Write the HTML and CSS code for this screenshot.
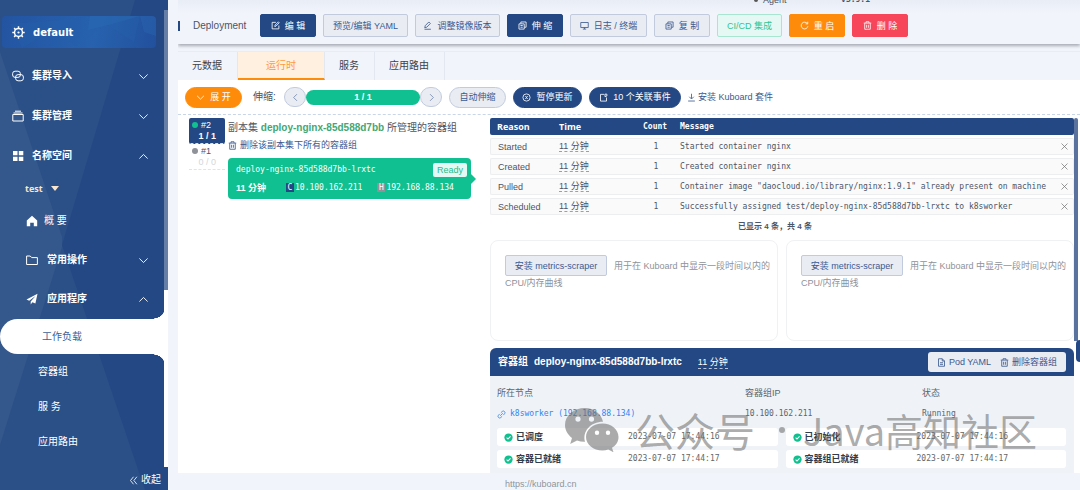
FILE: index.html
```html
<!DOCTYPE html>
<html lang="zh-CN">
<head>
<meta charset="utf-8">
<title>Kuboard - Deployment</title>
<link rel="stylesheet" href="styles.css">
</head>
<body>
<svg class="sprite" aria-hidden="true">
  <symbol id="down" viewBox="0 0 12 12"><path d="M1.5 3.8 6 8.2l4.500-4.400"/></symbol>
  <symbol id="up" viewBox="0 0 12 12"><path d="M1.500 8.200 6 3.800l4.500 4.400"/></symbol>
  <symbol id="left" viewBox="0 0 12 12"><path d="M8 1.500 3.500 6 8 10.500"/></symbol>
  <symbol id="right" viewBox="0 0 12 12"><path d="M4 1.500 8.500 6 4 10.500"/></symbol>
  <symbol id="edit" viewBox="0 0 12 12"><path d="M6.500 1.800H1.500v8.700h9V6M5 7.300l.3-1.700L9.800 1.200l1.200 1.200-4.400 4.500z"/></symbol>
  <symbol id="pen" viewBox="0 0 12 12"><path d="M2.300 9 3 6.200 7.800 1.300l2 2L5 8.300zM2 11h8.500"/></symbol>
  <symbol id="copy" viewBox="0 0 12 12"><path d="M1.300 3.800h7v7h-7zM3.800 3.500V1.300h7v7H8.500M3.300 6h3M3.300 8.300h3"/></symbol>
  <symbol id="monitor" viewBox="0 0 12 12"><path d="M1 2h10v6.700H1zM3.800 10.800h4.400M6 8.700v2"/></symbol>
  <symbol id="refresh" viewBox="0 0 12 12"><path d="M9.800 3.500A4.500 4.500 0 1 0 10.500 7M10.300 1v2.800H7.500"/></symbol>
  <symbol id="trash" viewBox="0 0 12 12"><path d="M1 2.800h10M4 2.800V1h4v1.800M2.300 3v8h7.400V3M4.800 5v4M7.200 5v4"/></symbol>
  <symbol id="pause" viewBox="0 0 12 12"><circle cx="6" cy="6" r="4.800"/><path d="M4.500 4 6 6 4.500 8M7.500 4 6 6l1.500 2"/></symbol>
  <symbol id="note" viewBox="0 0 12 12"><path d="M7 1.800H2v9h8V6M8 1.500h2.500V4L8 5z"/></symbol>
  <symbol id="download" viewBox="0 0 12 12"><path d="M6 1v6.500M3 5l3 3 3-3M1.500 10.700h9"/></symbol>
  <symbol id="doc" viewBox="0 0 12 12"><path d="M2 1h5l3 3v7H2zM7 1v3h3M4 6.300h4M4 8.500h4"/></symbol>
  <symbol id="link" viewBox="0 0 12 12"><path d="M5.200 3.600 7 1.900a2.200 2.200 0 0 1 3.100 3.100L8.400 6.800M6.800 8.400 5 10.100A2.200 2.200 0 0 1 1.900 7l1.700-1.800M4.300 7.700l3.400-3.400"/></symbol>
  <symbol id="close" viewBox="0 0 12 12"><path d="m2 2 8 8M10 2l-8 8"/></symbol>
  <symbol id="check" viewBox="0 0 12 12"><circle cx="6" cy="6" r="5.500" fill="#10c08f" stroke="none"/><path d="m3.500 6.200 1.800 1.800 3.400-3.600" stroke="#fff" stroke-width="1.400"/></symbol>
</svg>
<div class="app">
  <aside class="sidebar">
    <svg class="facets" viewBox="0 0 168 490" preserveAspectRatio="none" aria-hidden="true">
      <path fill="#2b5087" d="M0 0h135L62 245l83 245H0z"/>
      <path fill="#35588c" d="M0 52 62 237v10L0 445z"/>
    </svg>
    <a class="cluster" href="#">
      <svg class="facets" viewBox="0 0 154 32" preserveAspectRatio="none" aria-hidden="true">
        <path fill="#2560ad" d="m20 32 32-19 22 17 30-22 28 18 6-26H88L60 4 8 8z" opacity=".35"/>
        <path fill="#2f72bd" d="m88 0 50 0-28 8-24 6zM138 0l4 16 12 4V0z" opacity=".25"/>
      </svg>
      <svg class="wheel" viewBox="0 0 14 14" aria-hidden="true"><circle cx="7" cy="7" r="4.300"/><circle class="hub" cx="7" cy="7" r="1.200"/><path d="M7 .3v2.400M7 11.300v2.400M.3 7h2.400M11.300 7h2.400M2.300 2.300l1.600 1.600M10.100 10.100l1.600 1.600M11.700 2.300l-1.600 1.600M3.900 10.100l-1.600 1.600"/></svg>
      <span>default</span>
    </a>
    <nav>
      <button class="item"><svg class="ico lg" viewBox="0 0 12 12"><rect x=".6" y="1.200" width="7.800" height="6.200" rx="2.500"/><rect x="3.600" y="4.600" width="7.800" height="6.200" rx="2.500"/></svg><span>集群导入</span><svg class="ico chev"><use href="#down"/></svg></button>
      <button class="item"><svg class="ico lg" viewBox="0 0 12 12"><path d="M.8 4.500h10.400v6.500H.8zM1.500 3h9M3 1.200h6"/></svg><span>集群管理</span><svg class="ico chev"><use href="#down"/></svg></button>
      <button class="item"><svg class="ico lg" viewBox="0 0 12 12"><path fill="currentColor" stroke="none" d="M1 1h4.500v4.200H1zM6.800 1h4.500v4.200H6.800zM1 6.700h4.500V11H1zM6.800 6.700h4.500V11H6.800z"/></svg><span>名称空间</span><svg class="ico chev"><use href="#up"/></svg></button>
      <button class="namespace">test<i class="caret"></i></button>
      <a class="item sub plain" href="#"><svg class="ico lg" viewBox="0 0 12 12"><path fill="currentColor" stroke="none" d="M6 .8.800 5.500V11.200h3.400V7.800h3.600v3.400h3.400V5.500z"/></svg><span>概 要</span></a>
      <button class="item sub tight"><svg class="ico lg" viewBox="0 0 12 12"><path d="M.6 2h3.600l1.500 1.600h5.700v6.900H.6z"/></svg><span>常用操作</span><svg class="ico chev"><use href="#down"/></svg></button>
      <button class="item sub"><svg class="ico lg" viewBox="0 0 12 12"><path fill="currentColor" stroke="none" d="M11.500.8.500 6.500l2.700 1.200L9.500 3 4.700 8.400v3l1.700-2.200 3 1.300z"/></svg><span>应用程序</span><svg class="ico chev"><use href="#up"/></svg></button>
      <a class="leaf active" href="#">工作负载</a>
      <a class="leaf" href="#">容器组</a>
      <a class="leaf" href="#">服 务</a>
      <a class="leaf" href="#">应用路由</a>
    </nav>
    <button class="collapse"><svg class="ico" viewBox="0 0 12 12"><path d="M6 1 2 6l4 5M10.500 1l-4 5 4 5"/></svg>收起</button>
    <div class="side-scroll"></div>
  </aside>

  <main class="main">
    <header class="topbar">
      <div class="agent"><i></i><span>Agent</span><b>v3.9.1</b></div>
      <h1>Deployment</h1>
      <button class="btn primary w-s"><svg class="ico"><use href="#edit"/></svg>编 辑</button>
      <button class="btn w-l">预览/编辑 YAML</button>
      <button class="btn w-l"><svg class="ico"><use href="#pen"/></svg>调整镜像版本</button>
      <button class="btn primary w-s"><svg class="ico"><use href="#copy"/></svg>伸 缩</button>
      <button class="btn w-m"><svg class="ico"><use href="#monitor"/></svg>日志 / 终端</button>
      <button class="btn w-s"><svg class="ico"><use href="#copy"/></svg>复 制</button>
      <button class="btn success">CI/CD 集成</button>
      <button class="btn warning w-s"><svg class="ico"><use href="#refresh"/></svg>重 启</button>
      <button class="btn danger w-s"><svg class="ico"><use href="#trash"/></svg>删 除</button>
    </header>

    <div class="tabs" role="tablist">
      <button role="tab">元数据</button><button role="tab" class="on" aria-selected="true">运行时</button><button role="tab">服务</button><button role="tab">应用路由</button>
    </div>

    <section class="content">
      <div class="toolbar">
        <button class="pill warning"><svg class="ico"><use href="#down"/></svg>展 开</button>
        <span class="scale-label">伸缩:</span>
        <div class="scaler">
          <button class="round" aria-label="减少"><svg class="ico"><use href="#left"/></svg></button>
          <b>1 / 1</b>
          <button class="round" aria-label="增加"><svg class="ico"><use href="#right"/></svg></button>
        </div>
        <button class="pill">自动伸缩</button>
        <button class="pill primary p-m"><svg class="ico"><use href="#pause"/></svg>暂停更新</button>
        <button class="pill primary p-l"><svg class="ico"><use href="#note"/></svg>10 个关联事件</button>
        <a class="suite" href="#"><svg class="ico"><use href="#download"/></svg>安装 Kuboard 套件</a>
      </div>

      <div class="split">
        <div class="revisions">
          <div class="revs">
            <button class="rev current"><span><i></i>#2</span><b>1 / 1</b></button>
            <button class="rev"><span><i></i>#1</span><em>0 / 0</em></button>
          </div>
          <div class="replica">
            <h2>副本集 <strong>deploy-nginx-85d588d7bb</strong> 所管理的容器组</h2>
            <a class="remove" href="#"><svg class="ico"><use href="#trash"/></svg>删除该副本集下所有的容器组</a>
            <article class="pod">
              <div class="pod-line"><code>deploy-nginx-85d588d7bb-lrxtc</code><span class="ready">Ready</span></div>
              <div class="pod-line meta"><b class="age">11 分钟</b><code><i class="tag">C</i>10.100.162.211</code><code><i class="tag gray">H</i>192.168.88.134</code></div>
            </article>
          </div>
        </div>

        <div class="detail">
          <table class="events">
            <thead><tr><th class="c-reason">Reason</th><th class="c-time">Time</th><th class="c-count">Count</th><th>Message</th><th class="c-x"></th></tr></thead>
            <tbody>
              <tr><td>Started</td><td><span class="ago">11 分钟</span></td><td>1</td><td>Started container nginx</td><td><button class="x" aria-label="关闭"><svg class="ico"><use href="#close"/></svg></button></td></tr>
              <tr><td>Created</td><td><span class="ago">11 分钟</span></td><td>1</td><td>Created container nginx</td><td><button class="x" aria-label="关闭"><svg class="ico"><use href="#close"/></svg></button></td></tr>
              <tr><td>Pulled</td><td><span class="ago">11 分钟</span></td><td>1</td><td>Container image "daocloud.io/library/nginx:1.9.1" already present on machine</td><td><button class="x" aria-label="关闭"><svg class="ico"><use href="#close"/></svg></button></td></tr>
              <tr><td>Scheduled</td><td><span class="ago">11 分钟</span></td><td>1</td><td>Successfully assigned test/deploy-nginx-85d588d7bb-lrxtc to k8sworker</td><td><button class="x" aria-label="关闭"><svg class="ico"><use href="#close"/></svg></button></td></tr>
            </tbody>
          </table>
          <p class="shown">已显示 4 条，共 4 条</p>
          <div class="pair metrics">
            <div class="metric"><button class="btn">安装 metrics-scraper</button>用于在 Kuboard 中显示一段时间以内的 CPU/内存曲线</div>
            <div class="metric"><button class="btn">安装 metrics-scraper</button>用于在 Kuboard 中显示一段时间以内的 CPU/内存曲线</div>
          </div>
          <section class="group">
            <header>
              <h3>容器组</h3><h3>deploy-nginx-85d588d7bb-lrxtc</h3><span class="age">11 分钟</span>
              <div class="actions"><button><svg class="ico"><use href="#doc"/></svg>Pod YAML</button><button><svg class="ico"><use href="#trash"/></svg>删除容器组</button></div>
            </header>
            <div class="body">
              <dl>
                <div><dt>所在节点</dt><dd><a href="#"><svg class="ico"><use href="#link"/></svg>k8sworker (192.168.88.134)</a></dd></div>
                <div><dt>容器组IP</dt><dd>10.100.162.211</dd></div>
                <div><dt>状态</dt><dd>Running</dd></div>
              </dl>
              <div class="pair conditions">
                <div class="cond"><svg class="ico"><use href="#check"/></svg><b>已调度</b><time>2023-07-07 17:44:16</time></div>
                <div class="cond"><svg class="ico"><use href="#check"/></svg><b>已初始化</b><time>2023-07-07 17:44:16</time></div>
                <div class="cond"><svg class="ico"><use href="#check"/></svg><b>容器已就绪</b><time>2023-07-07 17:44:17</time></div>
                <div class="cond"><svg class="ico"><use href="#check"/></svg><b>容器组已就绪</b><time>2023-07-07 17:44:17</time></div>
              </div>
            </div>
          </section>
          <div class="detail-scroll"></div>
        </div>
      </div>
    </section>
    <footer class="foot"><a href="#">https://kuboard.cn</a></footer>
    <button class="drawer" aria-label="打开侧栏"></button>
  </main>
</div>
<div class="watermark">
  <svg viewBox="0 0 54 44" aria-hidden="true">
    <path fill-rule="evenodd" d="M20 0C9 0 0 7.500 0 17c0 5.200 2.800 9.800 7 13l-1.800 6 6.800-3.500c2.500.9 5.200 1.400 8 1.300-2.800-10.300 5.500-20 18-20C36.500 5.800 29 0 20 0zM13 8.500a2.600 2.600 0 1 1 0 5.200 2.600 2.600 0 0 1 0-5.200zm13.500 0a2.600 2.600 0 1 1 0 5.200 2.600 2.600 0 0 1 0-5.200z"/>
    <path fill-rule="evenodd" d="M37.500 15.500C28.300 15.500 21 21.500 21 29s7.300 13.500 16.500 13.500c2 0 4-.3 5.800-.9l5.200 2.700-1.500-4.500c4.200-2.500 6.500-6.300 6.500-10.800 0-7.500-7-13.500-16-13.500zM32 22.500a2.200 2.200 0 1 1 0 4.400 2.200 2.200 0 0 1 0-4.400zm11 0a2.200 2.200 0 1 1 0 4.400 2.200 2.200 0 0 1 0-4.400z"/>
  </svg>
  <span class="wm-a">公众号</span><i></i><span>Java高知社区</span>
</div>
</body>
</html>
```
FILE: styles.css
```css
* { box-sizing: border-box; }
body, h1, h2, h3, p, dl, dd { margin: 0; }
body {
  font: 9px/12px "Liberation Sans", "Noto Sans CJK SC", sans-serif;
  color: #4c5566;
  background: #f1f4fb;
  overflow: hidden;
}
button { font: inherit; color: inherit; background: none; border: 0; padding: 0; white-space: nowrap; cursor: pointer; }
a { color: inherit; text-decoration: none; }
i, em { font-style: normal; }
code, time { font-family: "DejaVu Sans Mono", monospace; font-size: 8px; }
.sprite { display: none; }
.ico { width: 9px; height: 9px; flex: none; fill: none; stroke: currentColor; stroke-width: 1.1; }
.facets { position: absolute; inset: 0; width: 100%; height: 100%; }

.app { display: flex; height: 100vh; }

/* sidebar */
.sidebar {
  position: relative;
  display: flex;
  flex-direction: column;
  flex: none;
  width: 168px;
  padding-top: 16px;
  color: #fff;
  background: #244883;
}
.sidebar nav { position: relative; display: flex; flex-direction: column; margin: 8px 4px 0 0; }
.cluster {
  position: relative;
  display: flex;
  align-items: center;
  gap: 8px;
  height: 32px;
  margin: 0 12px 0 2px;
  padding-left: 10px;
  border-radius: 4px;
  overflow: hidden;
  font: bold 10px/12px "DejaVu Sans", sans-serif;
  background: linear-gradient(100deg, #2354a2, #2762ae 60%, #22509d);
}
.cluster span { position: relative; padding-top: 1px; }
.wheel { position: relative; width: 13px; height: 13px; fill: none; stroke: #fff; stroke-width: 1.6; }
.wheel .hub { fill: #fff; stroke: none; }
.item {
  display: flex;
  align-items: center;
  height: 40px;
  padding: 0 15px 0 12px;
  font-size: 10px;
  font-weight: bold;
}
.item span { margin-left: 8px; }
.ico.lg { width: 12px; height: 12px; stroke-width: 1; }
.ico.chev { width: 11px; height: 11px; margin-left: auto; stroke-width: 1; }
.item.sub { padding-left: 26px; }
.item.tight { height: 38px; }
.item.plain { font-weight: normal; }
.item.plain span { margin-left: 6px; }
.item.sub:not(.plain) .lg + span { margin-left: 9px; }
.namespace {
  display: flex;
  align-items: center;
  gap: 8px;
  height: 25px;
  padding-left: 25px;
  color: #fbe5cd;
  font: bold 9px/12px "Open Sans", sans-serif;
}
.caret { border: 4px solid transparent; border-top: 5px solid #fbe5cd; border-bottom: 0; }
.leaf { display: flex; align-items: center; height: 35px; padding-left: 38px; font-size: 10px; }
.leaf.active {
  position: relative;
  padding-left: 42px;
  color: #3f5f94;
  background: #fff;
  border-radius: 18px 0 0 18px;
}
.leaf.active::before, .leaf.active::after {
  content: "";
  position: absolute;
  right: 0;
  width: 14px;
  height: 8px;
}
.leaf.active::before { bottom: 100%; background: radial-gradient(ellipse 14px 8px at 0 0, transparent 97%, #fff); }
.leaf.active::after { top: 100%; background: radial-gradient(ellipse 14px 8px at 0 100%, transparent 97%, #fff); }
.collapse {
  position: relative;
  display: flex;
  align-items: center;
  gap: 3px;
  height: 20px;
  margin-top: auto;
  align-self: flex-end;
  padding-right: 7px;
  font-size: 10px;
}
.side-scroll {
  position: absolute;
  top: 10px;
  right: 0;
  bottom: 23px;
  width: 4px;
  background: linear-gradient(#647ea8, #647ea8) top / 100% 280px no-repeat #fff;
}

/* main */
.main { position: relative; flex: 1; min-width: 0; display: flex; flex-direction: column; padding-left: 10px; }
.topbar {
  position: relative;
  display: flex;
  align-items: center;
  gap: 7px;
  height: 44px;
  padding-top: 7px;
  background: linear-gradient(#e8edf6, #f2f4fb 14px);
  box-shadow: 0 2px 3px #a9acb4;
  clip-path: inset(0 0 -10px 0);
}
.topbar h1 {
  width: 75px;
  padding-left: 13px;
  border-left: 2px solid #244883;
  font-size: 10px;
  line-height: 10px;
  font-weight: normal;
}
.agent { position: absolute; top: -6px; left: 576px; display: flex; align-items: center; gap: 5px; width: 116px; }
.agent i { width: 4px; height: 4px; border-radius: 50%; background: #555; }
.agent b { margin-left: auto; font: bold 8px/12px "DejaVu Sans Mono", monospace; }
.btn, .pill {
  display: inline-flex;
  align-items: center;
  justify-content: center;
  gap: 5px;
  height: 23px;
  border: 1px solid #c2cbdd;
  border-radius: 2px;
  color: #3b5a90;
  background: #e9ecf3;
}
.w-s { width: 56px; }
.w-m { width: 77px; }
.w-l { width: 85px; }
.btn.success { width: 65px; color: #2fc596; border-color: #a9e6d2; background: #e6f8f3; }
.btn.primary, .pill.primary { color: #fff; background: #244883; border-color: #244883; }
.btn.warning, .pill.warning { color: #fff; background: #ff8b0b; border-color: #ff8b0b; }
.btn.danger { color: #fff; background: #f74659; border-color: #f74659; }

.tabs { display: flex; flex: none; height: 29px; margin-top: 7px; border-top: 1px solid #e9ecf2; }
.tabs button { padding: 0 15px 0 14px; font-size: 10px; border-right: 1px solid #e3e7ef; color: #3d4349; }
.tabs .on { padding: 2px 28px 0; color: #ff9a3c; background: #fff0e0; border-bottom: 2px solid #ff8b0b; }

.content { flex: 1; min-height: 0; display: flex; flex-direction: column; background: #fff; }
.toolbar { display: flex; align-items: center; gap: 7px; height: 34px; padding-left: 7px; }
.pill { height: 21px; width: 57px; border-radius: 11px; }
.pill.p-m { width: 69px; }
.pill.p-l { width: 92px; }
.scale-label { width: 28px; margin-left: 4px; font-size: 10px; white-space: nowrap; }
.scaler { display: flex; align-items: center; margin-left: -4px; }
.scaler b { width: 114px; height: 15px; border-radius: 8px; text-align: center; line-height: 15px; color: #fff; background: #11c091; }
.round { display: flex; align-items: center; justify-content: center; width: 22px; height: 20px; border: 1px solid #c2cbdd; border-radius: 10px; background: #e9ecf3; color: #7488aa; }
.suite { display: flex; align-items: center; gap: 2px; margin-left: -1px; color: #3b5a90; white-space: nowrap; }

.split { flex: 1; min-height: 0; display: flex; padding-top: 3px; border-top: 1px dashed #c9d6ea; }
.revisions { display: flex; flex: none; gap: 3px; width: 312px; padding: 0 19px 0 11px; }
.revs { flex: none; width: 36px; }
.rev { display: block; width: 100%; height: 26px; text-align: right; line-height: 11px; border-bottom: 1px dashed #dfe3ea; padding: 0 9px 0 3px; }
.rev span { display: flex; align-items: center; gap: 3px; }
.rev i { width: 6px; height: 6px; border-radius: 50%; background: #8f9299; }
.rev em { color: #d3d6dc; }
.rev.current { color: #fff; background: #244883; border-radius: 2px; }
.rev.current i { background: #11c091; }
.replica { flex: 1; min-width: 0; }
.replica h2 { font-size: 10px; line-height: 20px; font-weight: normal; white-space: nowrap; }
.replica strong { color: #42a774; }
.remove { display: flex; align-items: center; gap: 3px; height: 14px; color: #3b5a90; white-space: nowrap; }
.pod {
  position: relative;
  height: 41px;
  margin-top: 6px;
  padding: 4px 4px 0 8px;
  border-radius: 4px;
  color: #fff;
  background: #11c091;
}
.pod::after { content: ""; position: absolute; left: 100%; top: 16px; border: 5px solid transparent; border-left-color: #11c091; border-right: 0; }
.pod-line { display: flex; align-items: center; height: 16px; white-space: nowrap; }
.pod-line code { font-size: 8px; }
.ready { margin-left: auto; padding: 1px 4px; border-radius: 2px; color: #24bd91; background: #e6f8f3; }
.meta { margin-top: 2px; }
.meta .age { width: 50px; }
.meta code + code { margin-left: 15px; }
.tag { display: inline-block; width: 8px; margin-right: 1px; line-height: 9px; text-align: center; background: #244883; }
.tag.gray { background: #8f9299; }

.detail { position: relative; flex: 1; min-width: 0; padding-right: 6px; }
.events { width: 100%; table-layout: fixed; border-collapse: separate; border-spacing: 0 3px; margin: -3px 0; font: 8px/12px "DejaVu Sans Mono", monospace; }
.events th { height: 17px; padding: 0; text-align: left; color: #fff; background: #244883; }
.events td { height: 17px; padding: 0; line-height: 12px; border: 1px solid #eceef0; border-width: 1px 0; background: #fafafa; white-space: nowrap; }
.events tr > :first-child { padding-left: 7px; border-radius: 2px 0 0 2px; }
.events tr > :last-child { border-radius: 0 2px 2px 0; }
.events td:first-child { border-left-width: 1px; font: 9px/12px "Liberation Sans", sans-serif; }
.events td:last-child { border-right-width: 1px; }
.events td:nth-child(3) { text-align: center; }
.events .c-reason { width: 69px; font: bold 9px/12px "Open Sans", sans-serif; }
.events .c-time { width: 78px; font: bold 9px/12px "Open Sans", sans-serif; }
.c-count { width: 43px; }
.events .c-count { padding-left: 6px; }
.events td:nth-child(3) { padding-right: 5px; }
.c-x { width: 14px; }
.ago { font: 9px/11px "Liberation Sans", "Noto Sans CJK SC", sans-serif; border-bottom: 1px dashed #9aa0aa; }
.x { display: block; color: #777; }
.x .ico { display: block; stroke-width: 1; }
.shown { margin: 5px 0 6px; line-height: 14px; text-align: center; font-weight: bold; font-size: 8px; padding-right: 14px; }

.pair { display: grid; grid-template-columns: 1fr 1fr; gap: 4px 8px; }
.metric { height: 101px; padding: 14px 4px 0 14px; border: 1px solid #f0f1f3; border-radius: 8px; line-height: 14px; color: #8e929a; }
.metric .btn { width: 102px; height: 21px; margin-right: 7px; }
.group { margin-top: 7px; border-radius: 6px 6px 0 0; background: #eff3f8; overflow: hidden; }
.group header { display: flex; align-items: center; height: 28px; gap: 6px; padding: 0 8px; color: #fff; background: #244883; }
.group h3 { font-size: 10px; white-space: nowrap; }
.group .age { margin-left: 10px; border-bottom: 1px dashed #b9c6dd; white-space: nowrap; }
.actions { display: flex; align-items: center; justify-content: center; gap: 9px; width: 138px; height: 20px; margin-left: auto; border-radius: 3px; color: #3b5a90; background: #e9ecf3; }
.actions button { display: flex; align-items: center; gap: 3px; }
.body { padding: 11px 8px 5px 7px; }
.body dl { display: grid; grid-template-columns: 248fr 177fr 144fr; color: #5d636e; }
.body dd { margin: 9px 0 8px; font: 8px/12px "DejaVu Sans Mono", monospace; }
.body dd a { display: flex; align-items: center; gap: 4px; color: #2d86f3; white-space: nowrap; }
.cond { display: flex; align-items: center; gap: 3px; height: 18px; padding-left: 7px; border-radius: 3px; background: #fff; }
.cond b { width: 109px; color: #333c4a; }
.cond time { color: #666; }
.detail-scroll { position: absolute; top: 0; right: 2px; bottom: 0; width: 4px; border-radius: 2px; background: linear-gradient(#5a729e, #5a729e) top / 100% 223px no-repeat #fff; }

.foot { flex: none; height: 17px; padding: 5px 0 0 327px; color: #8f949c; }
.drawer { position: absolute; top: 340px; right: 0; width: 4px; height: 22px; border-radius: 11px 0 0 11px; background: #244883; }

.watermark {
  position: absolute;
  left: 565px;
  top: 408px;
  display: flex;
  align-items: center;
  height: 44px;
  color: rgba(110, 110, 110, .58);
  font: 38px/44px "Noto Sans CJK SC", sans-serif;
  white-space: nowrap;
  pointer-events: none;
}
.watermark svg { width: 54px; height: 44px; fill: currentColor; }
.watermark i { width: 6px; height: 6px; margin: 0 18px 0 24px; border-radius: 50%; background: currentColor; }
.wm-a { margin-left: 16px; font-size: 40px; }
```
